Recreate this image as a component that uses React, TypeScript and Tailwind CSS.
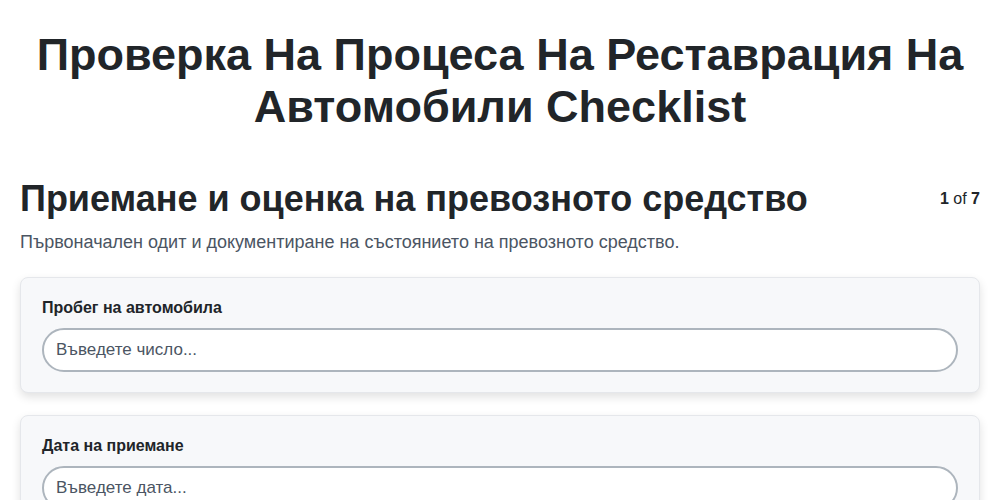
import React from 'react';

const fields = [
  { label: 'Пробег на автомобила', placeholder: 'Въведете число...', type: 'number' },
  { label: 'Дата на приемане', placeholder: 'Въведете дата...', type: 'text' },
  { label: 'Собственик', placeholder: 'Въведете текст...', type: 'text' },
];

export default function App() {
  return (
    <div className="min-h-screen bg-white px-5 font-['Liberation_Sans',Arial,sans-serif] text-[#212529]">
      <h1 className="pt-[29px] text-center text-[45px] font-bold leading-[52px]">
        Проверка На Процеса На Реставрация На Автомобили Checklist
      </h1>

      <div className="mt-[44px] flex items-start justify-between">
        <h2 className="text-[36px] font-bold leading-[44px]">Приемане и оценка на превозното средство</h2>
        <div className="pt-[10px] text-[16px]">
          <span className="font-bold">1</span> of <span className="font-bold">7</span>
        </div>
      </div>
      <p className="mt-[8px] text-[18px] leading-[27px] text-[#4b5563]">
        Първоначален одит и документиране на състоянието на превозното средство.
      </p>

      <div className="mt-[21px] flex flex-col gap-[22px]">
        {fields.map((f) => (
          <div
            key={f.label}
            className="rounded-lg border border-[#e5e7eb] bg-[#f7f8fa] px-[21px] pb-[20px] pt-[20px] shadow-[0_4px_10px_rgba(0,0,0,0.12)]"
          >
            <label className="block text-[16px] font-bold leading-[20px] text-[#212529]">{f.label}</label>
            <input
              type={f.type}
              placeholder={f.placeholder}
              className="mt-[10px] block h-[44px] w-full rounded-full border-2 border-[#adb5bd] bg-white px-[12px] text-[17px] outline-none placeholder:text-[#4b5563]"
            />
          </div>
        ))}
      </div>
    </div>
  );
}
